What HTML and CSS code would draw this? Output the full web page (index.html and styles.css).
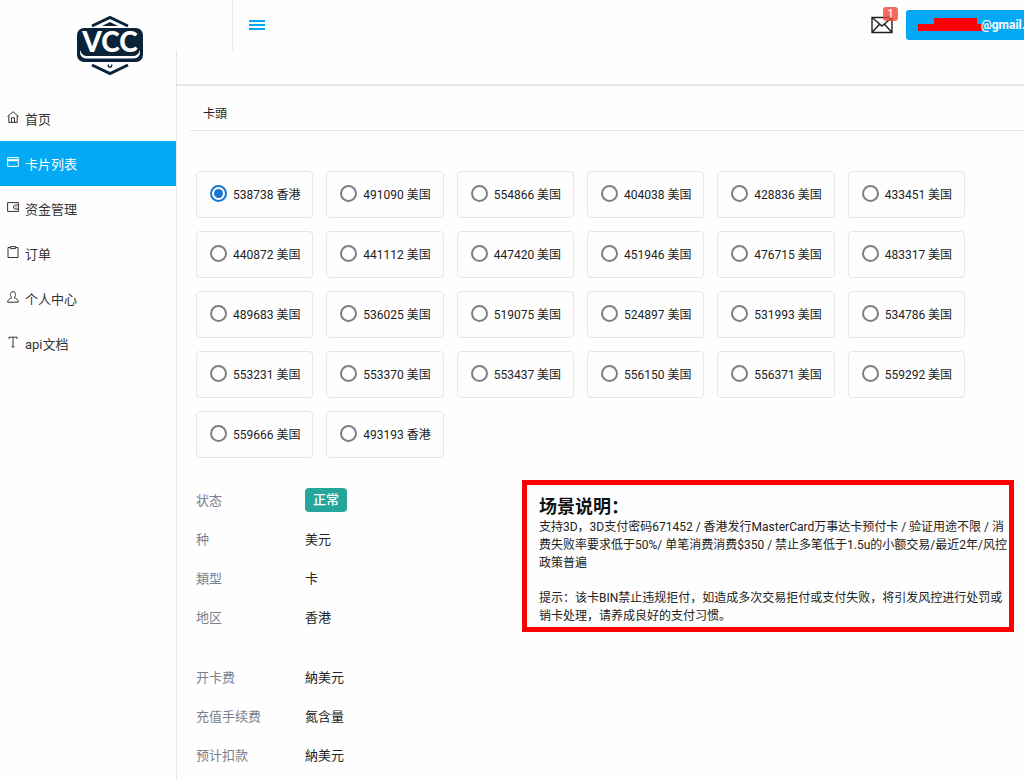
FILE: index.html
```html
<!DOCTYPE html>
<html lang="zh-CN">
<head>
<meta charset="utf-8">
<title>卡片列表</title>
<link rel="stylesheet" href="styles.css">
</head>
<body>
<div class="app">
  <aside class="sidebar">
    <div class="brand">
      <svg class="logo" width="68" height="62" viewBox="0 0 68 62" role="img" aria-label="VCC">
        <g fill="none" stroke="#0b2338" stroke-width="3">
          <path d="M16 11 34 2.500 52 11"/>
          <path d="M16 50 34 58.500 52 50"/>
        </g>
        <path d="M26 11 34 7 42 11Z" fill="#0b2338"/>
        <path d="M32.300 49.500v1a1.700 1.700 0 0 0 3.400 0v-1" fill="none" stroke="#0b2338" stroke-width="1.500"/>
        <rect x="1" y="13" width="66" height="34" rx="7" fill="#0b2338"/>
        <path d="M4 35q2 6 7 6h46q5 0 7-6v2.500q0 6-8 6H12q-8 0-8-6Z" fill="#fff"/>
        <text class="logo-text" x="34" y="37" text-anchor="middle">VCC</text>
      </svg>
    </div>
    <nav class="menu">
      <a class="item" href="#"><svg class="icon" viewBox="0 0 12 12"><path d="M.5 5.500 6 .7l5.500 4.800M1.800 4.600v6.800h8.400V4.600M4.500 11.400V6.800h3v4.600"/></svg>首页</a>
      <a class="item active" href="#"><svg class="icon" viewBox="0 0 12 12"><path d="M.7 1.600h10.600v8.800H.7z"/><path d="M.7 4.200h10.600" stroke-width="2"/></svg>卡片列表</a>
      <a class="item" href="#"><svg class="icon" viewBox="0 0 12 12"><path d="M11.400 4V1.600H.6v8.800h10.800V8M11.400 4H8.500a2 2 0 0 0 0 4h2.900zM8.500 6h1"/></svg>资金管理</a>
      <a class="item" href="#"><svg class="icon" viewBox="0 0 12 12"><path d="M3.500 1.500h-2.500v10h10v-10H8.500M3.500.6h5v2h-5z"/></svg>订单</a>
      <a class="item" href="#"><svg class="icon" viewBox="0 0 12 12"><path d="M6 .6c-1.600 0-2.600 1.200-2.600 2.900 0 1.400.7 2.800 1.600 3.300C3 7.200.8 8.600.6 11.200h10.800C11.200 8.600 9 7.200 7 6.800c.9-.5 1.600-1.900 1.600-3.300C8.600 1.800 7.600.6 6 .6z"/></svg>个人中心</a>
      <a class="item" href="#"><svg class="icon" viewBox="0 0 12 12"><path d="M2 3V1.200h8V3M6 1.200v9.600M4.500 10.900h3"/></svg>api文档</a>
    </nav>
  </aside>

  <div class="page">
    <header class="topbar">
      <button class="toggle" type="button" aria-label="菜单">
        <svg width="16" height="12" viewBox="0 0 16 12"><path d="M0 2h16M0 6h16M0 10h16" stroke="#03a9f4" stroke-width="2"/></svg>
      </button>
      <div class="tools">
        <button class="mail" type="button" aria-label="消息">
          <svg width="22" height="18" viewBox="0 0 22 18"><path d="M1 1.500h20v15H1zM1 1.500l10 8.500 10-8.500M1 16.500l7.500-8.300M21 16.500l-7.500-8.300" fill="none" stroke="#222" stroke-width="1.400"/></svg>
          <span class="badge">1</span>
        </button>
        <button class="account" type="button"><svg class="mask" width="66" height="14" viewBox="0 0 66 14"><path d="M0 6h16V0h43v6h6v7H0z" fill="#f00"/></svg>@gmail.com</button>
      </div>
    </header>

    <main class="content">
      <h1 class="title">卡頭</h1>
      <form class="bins">
        <label class="bin"><input type="radio" name="bin" checked>538738 香港</label>
        <label class="bin"><input type="radio" name="bin">491090 美国</label>
        <label class="bin"><input type="radio" name="bin">554866 美国</label>
        <label class="bin"><input type="radio" name="bin">404038 美国</label>
        <label class="bin"><input type="radio" name="bin">428836 美国</label>
        <label class="bin"><input type="radio" name="bin">433451 美国</label>
        <label class="bin"><input type="radio" name="bin">440872 美国</label>
        <label class="bin"><input type="radio" name="bin">441112 美国</label>
        <label class="bin"><input type="radio" name="bin">447420 美国</label>
        <label class="bin"><input type="radio" name="bin">451946 美国</label>
        <label class="bin"><input type="radio" name="bin">476715 美国</label>
        <label class="bin"><input type="radio" name="bin">483317 美国</label>
        <label class="bin"><input type="radio" name="bin">489683 美国</label>
        <label class="bin"><input type="radio" name="bin">536025 美国</label>
        <label class="bin"><input type="radio" name="bin">519075 美国</label>
        <label class="bin"><input type="radio" name="bin">524897 美国</label>
        <label class="bin"><input type="radio" name="bin">531993 美国</label>
        <label class="bin"><input type="radio" name="bin">534786 美国</label>
        <label class="bin"><input type="radio" name="bin">553231 美国</label>
        <label class="bin"><input type="radio" name="bin">553370 美国</label>
        <label class="bin"><input type="radio" name="bin">553437 美国</label>
        <label class="bin"><input type="radio" name="bin">556150 美国</label>
        <label class="bin"><input type="radio" name="bin">556371 美国</label>
        <label class="bin"><input type="radio" name="bin">559292 美国</label>
        <label class="bin"><input type="radio" name="bin">559666 美国</label>
        <label class="bin"><input type="radio" name="bin">493193 香港</label>
      </form>

      <div class="details">
        <div class="facts">
          <dl class="list">
            <dt>状态</dt><dd><span class="status">正常</span></dd>
            <dt>种</dt><dd>美元</dd>
            <dt>類型</dt><dd>卡</dd>
            <dt>地区</dt><dd>香港</dd>
          </dl>
          <dl class="list">
            <dt>开卡费</dt><dd>納美元</dd>
            <dt>充值手续费</dt><dd>氮含量</dd>
            <dt>预计扣款</dt><dd>納美元</dd>
          </dl>
        </div>
        <section class="notice">
          <h2>场景说明：</h2>
          <p>支持3D，3D支付密码671452 / 香港发行MasterCard万事达卡预付卡 / 验证用途不限 / 消<br>费失败率要求低于50%/ 单笔消费消费$350 / 禁止多笔低于1.5u的小额交易/最近2年/风控<br>政策普遍</p>
          <p>提示：该卡BIN禁止违规拒付，如造成多次交易拒付或支付失败，将引发风控进行处罚或<br>销卡处理，请养成良好的支付习惯。</p>
        </section>
      </div>
    </main>
  </div>
</div>
</body>
</html>
```

FILE: styles.css
```css
* {
  box-sizing: border-box;
}

body {
  margin: 0;
  background: #fefefe;
  color: #222;
  font-family: Roboto, "Noto Sans CJK SC", sans-serif;
  font-size: 12px;
  overflow-x: hidden;
}

button {
  border: 0;
  padding: 0;
  background: none;
  font: inherit;
}

.app {
  display: flex;
  min-height: 100vh;
}

/* Sidebar */
.sidebar {
  flex: 0 0 177px;
  display: flex;
  flex-direction: column;
}

.brand {
  height: 50px;
  padding: 15px 0 0 76px;
}

.logo-text {
  fill: #fff;
  font-family: Lato, sans-serif;
  font-size: 28px;
  font-weight: 900;
}

.menu {
  flex: 1;
  padding-top: 46px;
  border-right: 1px solid #e6e6e6;
}

.item {
  display: flex;
  align-items: center;
  gap: 6px;
  height: 45px;
  padding: 0 0 1px 7px;
  color: #333;
  font-size: 13px;
  text-decoration: none;
}

.icon {
  width: 12px;
  height: 12px;
  margin-bottom: 3px;
  fill: none;
  stroke: currentColor;
  stroke-width: 1;
}

.active {
  background: #03a9f4;
  color: #fff;
}

/* Top bar */
.page {
  flex: 1;
  min-width: 0;
}

.topbar {
  display: flex;
  justify-content: space-between;
  height: 86px;
  border-bottom: 2px solid #e6e6e6;
  overflow: hidden;
}

.toggle {
  height: 50px;
  margin-left: 55px;
  padding: 2px 16px 0;
  border-left: 1px solid #e6e6e6;
}

.tools {
  display: flex;
  align-items: flex-start;
  gap: 13px;
  margin-right: -42px;
}

.mail {
  position: relative;
  height: 50px;
}

.mail svg {
  display: block;
}

.badge {
  position: absolute;
  top: 7px;
  right: -5px;
  width: 15px;
  border-radius: 3px;
  background: rgba(244, 67, 54, 0.8);
  color: #fff;
  line-height: 14px;
  text-align: center;
}

.account {
  display: flex;
  align-items: center;
  width: 160px;
  height: 30px;
  margin-top: 10px;
  padding-left: 12px;
  border-radius: 3px;
  background: #03a9f4;
  color: #fff;
  font-weight: 700;
}

.mask {
  flex: none;
  margin-right: -3px;
}

/* Card BIN picker */
.title {
  margin: 0 0 0 13px;
  padding: 18px 13px 6px;
  border-bottom: 1px solid #e6e6e6;
  font-size: 12px;
  font-weight: 400;
  line-height: 20px;
}

.bins {
  display: grid;
  grid-template-columns: repeat(6, 1fr);
  gap: 13px;
  padding: 40px 59px 0 19px;
}

.bin {
  display: flex;
  align-items: center;
  gap: 6px;
  height: 47px;
  padding: 0 0 2px 13px;
  border: 1px solid #e6e6e6;
  border-radius: 4px;
  white-space: nowrap;
}

.bin input {
  appearance: none;
  flex: none;
  display: grid;
  place-items: center;
  width: 17px;
  height: 17px;
  margin: 0;
  border: 2px solid #808080;
  border-radius: 50%;
}

.bin input:checked {
  border-color: #1976d2;
}

.bin input:checked::before {
  content: "";
  width: 9px;
  height: 9px;
  border-radius: 50%;
  background: #1976d2;
}

/* Card details */
.details {
  display: grid;
  grid-template-columns: 2fr 3fr;
  align-items: start;
  padding: 22px 10px 0 19px;
}

.list {
  display: grid;
  grid-template-columns: 109px 1fr;
  grid-auto-rows: 39px;
  align-items: center;
  margin: 0 0 21px;
  font-size: 13px;
}

.list dt {
  color: #7b7f8e;
}

.list dd {
  margin: 0;
}

.status {
  display: inline-block;
  padding: 0 8px;
  border-radius: 4px;
  background: #26a69a;
  color: #fff;
  font-weight: 500;
  line-height: 24px;
}

.notice {
  padding: 10px 2px 2px 12px;
  border: 5px solid #f00;
  line-height: 18px;
  white-space: nowrap;
}

.notice h2 {
  margin: 0;
  color: #111;
  font-size: 18px;
  line-height: 23px;
}

.notice p {
  margin: 0 0 17px;
}

.notice p:last-child {
  margin: 0;
}
```
